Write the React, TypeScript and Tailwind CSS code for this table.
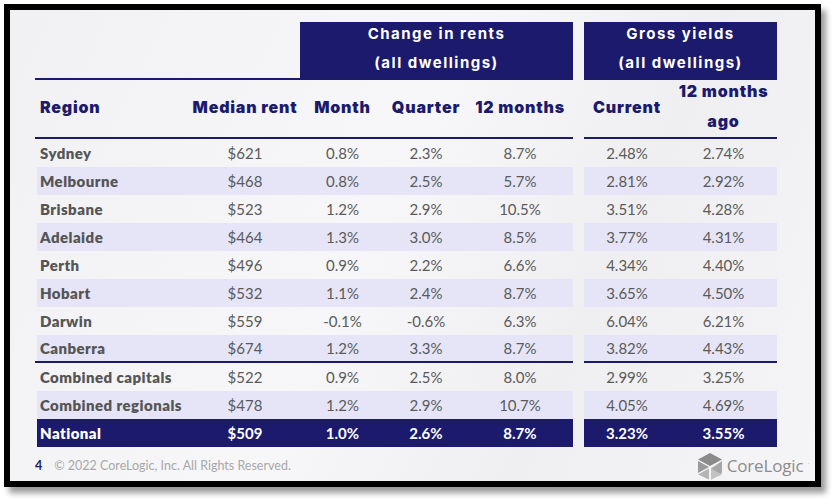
import React from "react";

type RowData = {
  region: string;
  rent: string;
  change: [string, string, string];
  yields: [string, string];
};

const rows: RowData[] = [
  { region: "Sydney", rent: "$621", change: ["0.8%", "2.3%", "8.7%"], yields: ["2.48%", "2.74%"] },
  { region: "Melbourne", rent: "$468", change: ["0.8%", "2.5%", "5.7%"], yields: ["2.81%", "2.92%"] },
  { region: "Brisbane", rent: "$523", change: ["1.2%", "2.9%", "10.5%"], yields: ["3.51%", "4.28%"] },
  { region: "Adelaide", rent: "$464", change: ["1.3%", "3.0%", "8.5%"], yields: ["3.77%", "4.31%"] },
  { region: "Perth", rent: "$496", change: ["0.9%", "2.2%", "6.6%"], yields: ["4.34%", "4.40%"] },
  { region: "Hobart", rent: "$532", change: ["1.1%", "2.4%", "8.7%"], yields: ["3.65%", "4.50%"] },
  { region: "Darwin", rent: "$559", change: ["-0.1%", "-0.6%", "6.3%"], yields: ["6.04%", "6.21%"] },
  { region: "Canberra", rent: "$674", change: ["1.2%", "3.3%", "8.7%"], yields: ["3.82%", "4.43%"] },
  { region: "Combined capitals", rent: "$522", change: ["0.9%", "2.5%", "8.0%"], yields: ["2.99%", "3.25%"] },
  { region: "Combined regionals", rent: "$478", change: ["1.2%", "2.9%", "10.7%"], yields: ["4.05%", "4.69%"] },
];

const national: RowData = {
  region: "National",
  rent: "$509",
  change: ["1.0%", "2.6%", "8.7%"],
  yields: ["3.23%", "3.55%"],
};

function Row({ d, shaded, lineBelow, total }: { d: RowData; shaded?: boolean; lineBelow?: boolean; total?: boolean }) {
  const bg = total ? "bg-[#1c1a6d]" : shaded ? "bg-[#e5e5f7]" : "";
  const line = lineBelow ? "border-b-2 border-[#1c1a6d]" : "";
  const txt = total ? "text-white font-bold" : "text-[#5a5a5a]";
  return (
    <div className={`flex h-[28px] font-['Lato',sans-serif] text-[15px] ${txt}`}>
      <div className={`flex w-[538px] ${line}`}>
        <div className={`flex ml-[2px] w-[536px] items-center ${bg}`}>
          <div
            className={`w-[153px] pl-[3px] font-extrabold tracking-[0.03em] whitespace-nowrap ${
              total ? "text-white" : "text-[#555555]"
            }`}
          >
            {d.region}
          </div>
          <div className="w-[110px] text-center">{d.rent}</div>
          <div className="w-[85px] text-center">{d.change[0]}</div>
          <div className="w-[82px] text-center">{d.change[1]}</div>
          <div className="w-[106px] text-center">{d.change[2]}</div>
        </div>
      </div>
      <div className="w-[11px]" />
      <div className={`flex w-[193px] items-center ${bg} ${line}`}>
        <div className="w-[86px] text-center">{d.yields[0]}</div>
        <div className="w-[107px] text-center">{d.yields[1]}</div>
      </div>
    </div>
  );
}

function Logo() {
  return (
    <div className="flex items-center gap-[4px] mr-[-4px]">
      <svg width="26" height="28" viewBox="0 0 26 28">
        <polygon points="13,1 25,7.5 13,14 1,7.5" fill="#8a8a8a" />
        <polygon points="1,9 12,15 1,21" fill="#9a9a9a" />
        <polygon points="1,22.5 12,16.5 12,27.5" fill="#b4b4b4" />
        <polygon points="14,16.5 25,9 25,21 14,27.5" fill="#a6a6a6" />
        <polygon points="14,16.5 25,22.5 14,27.5" fill="#c2c2c2" />
      </svg>
      <span className="font-['Open_Sans',sans-serif] text-[17px] text-[#8c8c8c] tracking-[-0.01em]">
        CoreLogic
      </span>
      <span className="text-[6px] text-[#aaa] -mt-[8px]">.</span>
    </div>
  );
}

export default function App() {
  const head = "font-['Inter',sans-serif] font-black text-[16px] tracking-[0.05em] text-[#1c1a6d]";
  const group =
    "bg-[#1c1a6d] flex flex-col items-center justify-center pb-[6px] font-['Inter',sans-serif] font-bold text-[15px] tracking-[0.1em] leading-[29px] text-white";
  return (
    <div className="w-[833px] h-[499px] bg-white pt-[4px] pl-[4px]">
      <div className="w-[817px] h-[483px] border-[6px] border-black shadow-[5px_6px_6px_rgba(0,0,0,0.4)]">
        <div className="w-full h-full bg-[linear-gradient(115deg,#f1f1f3_0%,#f7f7f9_45%,#efeff2_70%,#f5f5f7_100%)] pl-[25px] pt-[12px]">
          {/* group headers */}
          <div className="flex h-[58px]">
            <div className="w-[265px] border-b-2 border-[#1c1a6d]" />
            <div className={`w-[273px] ${group}`}>
              <span>Change in rents</span>
              <span>(all dwellings)</span>
            </div>
            <div className="w-[11px]" />
            <div className={`w-[193px] ${group}`}>
              <span>Gross yields</span>
              <span>(all dwellings)</span>
            </div>
          </div>

          {/* column headers */}
          <div className={`flex h-[59px] ${head}`}>
            <div className="flex w-[538px] items-center border-b-2 border-[#1c1a6d] pb-[3px]">
              <div className="w-[155px] pl-[5px]">Region</div>
              <div className="w-[110px] text-center whitespace-nowrap">Median rent</div>
              <div className="w-[85px] text-center">Month</div>
              <div className="w-[82px] text-center">Quarter</div>
              <div className="w-[106px] text-center whitespace-nowrap">12 months</div>
            </div>
            <div className="w-[11px]" />
            <div className="flex w-[193px] items-center border-b-2 border-[#1c1a6d] pb-[3px]">
              <div className="w-[86px] text-center">Current</div>
              <div className="w-[107px] text-center leading-[30px] -mt-[3px]">
                12 months
                <br />
                ago
              </div>
            </div>
          </div>

          {rows.map((r, i) => (
            <Row key={r.region} d={r} shaded={i % 2 === 1} lineBelow={i === 7} />
          ))}
          <Row d={national} total />

          {/* footer */}
          <div className="flex items-end justify-between w-[770px] mt-[5px]">
            <div className="flex items-center gap-[12px] font-['Lato',sans-serif] text-[12.5px] mb-[4px]">
              <span className="font-bold text-[#1c1a6d]">4</span>
              <span className="text-[#a8a8a8]">© 2022 CoreLogic, Inc. All Rights Reserved.</span>
            </div>
            <Logo />
          </div>
        </div>
      </div>
    </div>
  );
}
